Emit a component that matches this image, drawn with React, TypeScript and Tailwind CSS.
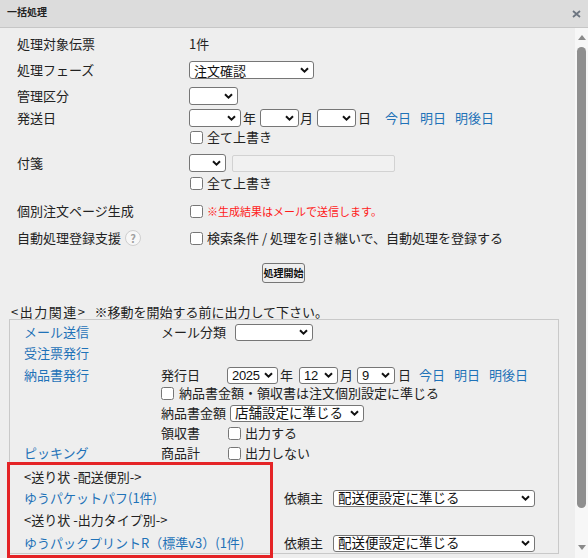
import React from "react";

function Chevron() {
  return (
    <svg width="9" height="6" viewBox="0 0 9 6" className="shrink-0">
      <path d="M1 1.2l3.5 3.4L8 1.2" stroke="#111" strokeWidth="2" fill="none" />
    </svg>
  );
}

function Select({ className, text, textClass }: { className: string; text?: string; textClass?: string }) {
  return (
    <div
      className={
        "flex items-center justify-between bg-white border border-[#767676] rounded-[3px] h-[17px] pl-[4px] pr-[4px] shrink-0 " +
        className
      }
    >
      <span className={"leading-none whitespace-nowrap text-[#111] " + (textClass ?? "text-[13px]")}>{text ?? ""}</span>
      <Chevron />
    </div>
  );
}

function Check() {
  return <span className="inline-block w-[13px] h-[13px] border border-[#767676] rounded-[2.5px] bg-white shrink-0" />;
}

const link = "text-[#1f72b8]";
const digits = "text-[13px] font-['Liberation_Sans',sans-serif] tracking-[-0.3px]";

export default function App() {
  return (
    <div className="w-[588px] h-[558px] overflow-hidden flex flex-col bg-[#eeeeee] text-[#222] text-[13px] leading-[16px] font-['Noto_Sans_CJK_JP','Noto_Sans',sans-serif]">
      {/* header */}
      <div className="h-[28px] shrink-0 bg-[#dcdcdc] border-b border-[#c6c6c6] flex items-center justify-between pl-[7px] pr-[7px]">
        <span className="text-[10px] font-bold leading-none text-[#222] -mt-[4px]">一括処理</span>
        <svg width="9" height="8" viewBox="0 0 9 8" className="mt-[1px]">
          <path d="M1 1l7 6M8 1L1 7" stroke="#6c7580" strokeWidth="1.8" />
        </svg>
      </div>

      <div className="flex flex-1 min-h-0">
        {/* content */}
        <div className="relative w-[575px] shrink-0">
          <div className="pt-[3px]">
            <div className="flex items-center h-[26px] pl-[17px]">
              <div className="w-[172px]">処理対象伝票</div>
              <div>1件</div>
            </div>
            <div className="flex items-center h-[26px] pl-[17px]">
              <div className="w-[172px]">処理フェーズ</div>
              <Select className="w-[125px] h-[18px]" text="注文確認" />
            </div>
            <div className="flex items-center h-[26px] pl-[17px]">
              <div className="w-[172px]">管理区分</div>
              <Select className="w-[49px] h-[18px]" />
            </div>
            <div className="flex items-center h-[18px] pl-[17px]">
              <div className="w-[172px]">発送日</div>
              <Select className="w-[52px] h-[18px]" />
              <span className="ml-[2px]">年</span>
              <Select className="w-[39px] h-[18px] ml-[4px]" />
              <span className="ml-[1px]">月</span>
              <Select className="w-[39px] h-[18px] ml-[4px]" />
              <span className="ml-[2px]">日</span>
              <span className={"ml-[14px] " + link}>今日</span>
              <span className={"ml-[9px] " + link}>明日</span>
              <span className={"ml-[9px] " + link}>明後日</span>
            </div>
            <div className="flex items-center h-[18px] mt-[1px] pl-[190px]">
              <Check />
              <span className="ml-[4px]">全て上書き</span>
            </div>
            <div className="flex items-center h-[18px] mt-[8px] pl-[17px]">
              <div className="w-[172px]">付箋</div>
              <Select className="w-[37px] h-[18px]" />
              <div className="ml-[6px] w-[163px] h-[17px] bg-[#f1f1f1] border border-[#d2d2d2] rounded-[2px]" />
            </div>
            <div className="flex items-center h-[18px] mt-[2px] pl-[190px]">
              <Check />
              <span className="ml-[4px]">全て上書き</span>
            </div>
            <div className="flex items-center h-[20px] mt-[9px] pl-[17px]">
              <div className="w-[173px]">個別注文ページ生成</div>
              <Check />
              <span className="ml-[4px] text-[11px] text-[#ff1a1a]">※生成結果はメールで送信します。</span>
            </div>
            <div className="flex items-center h-[20px] mt-[7px] pl-[17px]">
              <div className="w-[173px] flex items-center">
                <span>自動処理登録支援</span>
                <span className="ml-[4px] w-[16px] h-[16px] rounded-full bg-[#f7f7f7] border border-[#cfcfcf] flex items-center justify-center text-[11px] font-bold text-[#a0a0a0] leading-none">
                  ?
                </span>
              </div>
              <Check />
              <span className="ml-[4px]">検索条件 / 処理を引き継いで、自動処理を登録する</span>
            </div>
            <div className="flex justify-center pr-[8px] mt-[15px]">
              <button className="h-[20px] w-[43px] bg-[#efefef] border border-[#767676] rounded-[3px] text-[10px] font-bold text-[#111] leading-none px-0">
                処理開始
              </button>
            </div>
            <div className="flex items-center h-[14px] mt-[22px] pl-[11px]">
              <span className="tracking-[1.5px]">&lt;出力関連&gt;</span>
              <span className="ml-[8px]">※移動を開始する前に出力して下さい。</span>
            </div>

            {/* box */}
            <div className="ml-[9px] w-[550px] border border-[#c9c9c9] pb-[1px]">
              <div className="flex items-center h-[18px] mt-[3px] pl-[14px]">
                <div className={"w-[137px] " + link}>メール送信</div>
                <span>メール分類</span>
                <Select className="w-[78px] ml-[9px]" />
              </div>
              <div className="flex items-center h-[18px] mt-[3px] pl-[14px]">
                <div className={"w-[137px] " + link}>受注票発行</div>
              </div>
              <div className="flex items-center h-[18px] mt-[4px] pl-[14px]">
                <div className={"w-[137px] " + link}>納品書発行</div>
                <span className="w-[66px]">発行日</span>
                <Select className="w-[51px] pr-[3px]" text="2025" textClass={digits} />
                <span className="ml-[2px]">年</span>
                <Select className="w-[39px] ml-[6px] pr-[3px]" text="12" textClass={digits} />
                <span className="ml-[2px]">月</span>
                <Select className="w-[38px] ml-[4px] pr-[3px]" text="9" textClass={digits} />
                <span className="ml-[3px]">日</span>
                <span className={"ml-[8px] " + link}>今日</span>
                <span className={"ml-[9px] " + link}>明日</span>
                <span className={"ml-[9px] " + link}>明後日</span>
              </div>
              <div className="flex items-center h-[16px] mt-[1px] pl-[151px]">
                <Check />
                <span className="ml-[5px]">納品書金額・領収書は注文個別設定に準じる</span>
              </div>
              <div className="flex items-center h-[18px] mt-[3px] pl-[151px]">
                <span>納品書金額</span>
                <Select className="w-[134px] ml-[4px]" text="店舗設定に準じる" textClass="text-[13.5px]" />
              </div>
              <div className="flex items-center h-[18px] mt-[2px] pl-[151px]">
                <span className="w-[67px]">領収書</span>
                <Check />
                <span className="ml-[4px]">出力する</span>
              </div>
              <div className="flex items-center h-[18px] mt-[2px] pl-[14px]">
                <div className={"w-[137px] " + link}>ピッキング</div>
                <span className="w-[67px]">商品計</span>
                <Check />
                <span className="ml-[4px]">出力しない</span>
              </div>
              <div className="flex items-center h-[18px] mt-[6px] pl-[14px]">
                <span>&lt;送り状 -配送便別-&gt;</span>
              </div>
              <div className="flex items-center h-[18px] mt-[3px] pl-[14px]">
                <div className={"w-[260px] " + link}>ゆうパケットパフ(1件)</div>
                <span className="w-[49px]">依頼主</span>
                <Select className="w-[202px]" text="配送便設定に準じる" textClass="text-[13.5px]" />
              </div>
              <div className="flex items-center h-[18px] mt-[4px] pl-[14px]">
                <span>&lt;送り状 -出力タイプ別-&gt;</span>
              </div>
              <div className="flex items-center h-[18px] mt-[5px] pl-[14px]">
                <div className={"w-[260px] " + link}>ゆうパックプリントR（標準v3）(1件)</div>
                <span className="w-[49px]">依頼主</span>
                <Select className="w-[202px]" text="配送便設定に準じる" textClass="text-[13.5px]" />
              </div>
            </div>
          </div>

          {/* annotation */}
          <div className="absolute left-[7px] top-[434px] w-[266px] h-[96px] border-[3px] border-[#e42326]" />
        </div>

        {/* scrollbar */}
        <div className="w-[13px] bg-[#f7f7f7] flex flex-col items-center">
          <svg width="8" height="5" viewBox="0 0 8 5" className="mt-[7px]">
            <path d="M0 5L4 0l4 5z" fill="#8a8a8a" />
          </svg>
          <div className="mt-[7px] w-[9px] h-[461px] rounded-full bg-[#8f8f8f]" />
          <svg width="8" height="5" viewBox="0 0 8 5" className="mt-auto mb-[8px]">
            <path d="M0 0l4 5 4-5z" fill="#8a8a8a" />
          </svg>
        </div>
      </div>
    </div>
  );
}
